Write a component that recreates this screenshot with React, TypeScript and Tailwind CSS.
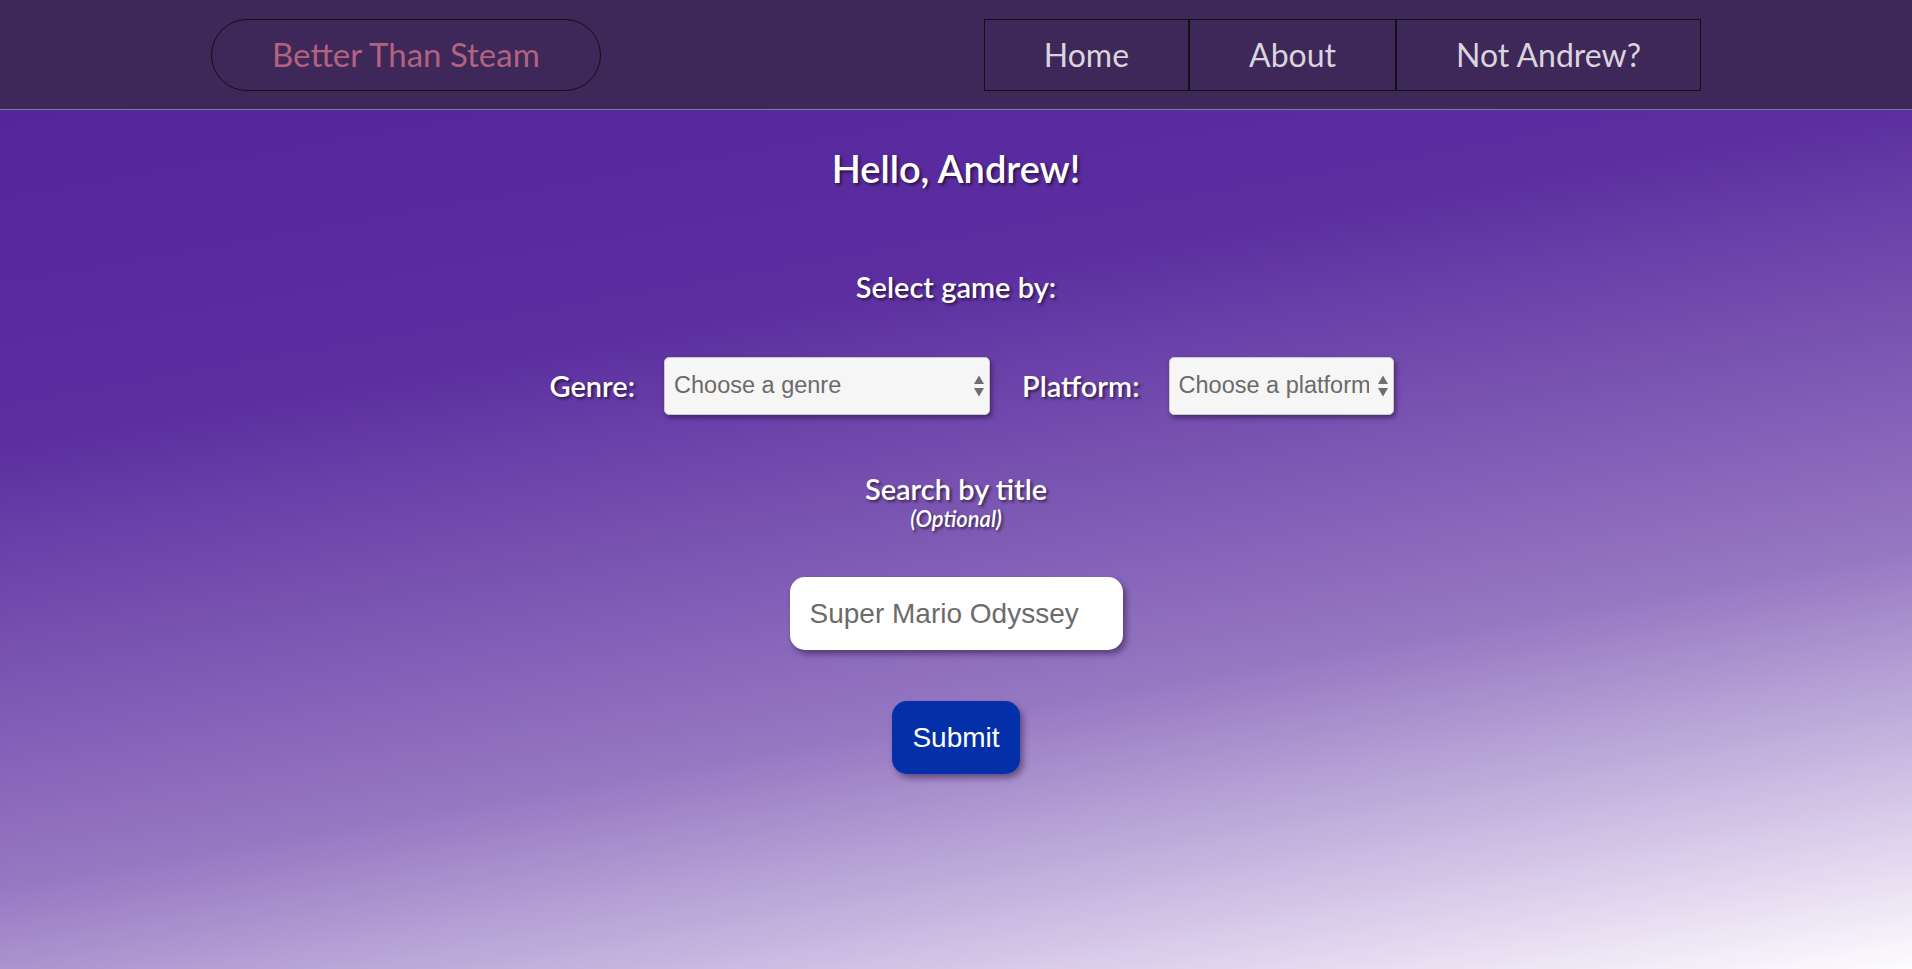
import React from "react";

const heading = "font-['Lato',sans-serif] text-white [text-shadow:2px_2px_3px_rgba(0,0,0,0.55)]";

function SelectBox({ label, width }: { label: string; width: string }) {
  return (
    <div className={`relative ${width} h-[58px]`}>
      <select
        defaultValue=""
        className="h-full w-full appearance-none rounded-[5px] border border-[#c9c9c9] bg-[#f6f6f6] pl-[9px] pr-6 font-['Liberation_Sans',Arial,sans-serif] text-[23.5px] text-[#6b6b6b] shadow-[2px_3px_5px_rgba(20,0,40,0.45)] outline-none"
      >
        <option value="">{label}</option>
      </select>
      <svg
        className="pointer-events-none absolute right-[5px] top-1/2 -translate-y-1/2"
        width="12"
        height="24"
        viewBox="0 0 12 24"
      >
        <path d="M6 1.5 L11 10 L1 10 Z" fill="#6e6e6e" />
        <path d="M6 22.5 L11 14 L1 14 Z" fill="#6e6e6e" />
      </svg>
    </div>
  );
}

function App() {
  return (
    <div className="flex min-h-screen flex-col">
      <header className="flex h-[110px] items-center justify-between border-b border-[#857b8f] bg-[#3e2759] px-[211px] font-['Lato',sans-serif]">
        <div className="flex h-[72px] items-center rounded-full border border-[#111] px-[60px] text-[33px] text-[#b3627f]">
          Better Than Steam
        </div>
        <nav className="flex h-[72px] text-[32px] text-[#d9d5dd]">
          <a className="flex items-center border border-[#111] px-[59px]">Home</a>
          <a className="flex items-center border border-[#111] px-[59px]">About</a>
          <a className="flex items-center border border-[#111] px-[59px]">Not Andrew?</a>
        </nav>
      </header>

      <main className="flex flex-1 flex-col items-center bg-[linear-gradient(170deg,#55259c_0%,#5c2ea0_28%,#6b41a9_37%,#9678c2_65%,#af98d1_73%,#d9cbea_87%,#fdfcfe_100%)] pb-10">
        <h1 className={`${heading} mt-[35px] text-[38px] font-semibold leading-[46px]`}>
          Hello, Andrew!
        </h1>

        <h2 className={`${heading} mt-[78px] text-[29px] font-semibold leading-[35px]`}>
          Select game by:
        </h2>

        <div className="mt-[53px] flex items-center pl-[31px]">
          <span className={`${heading} text-[29px] font-semibold`}>Genre:</span>
          <div className="ml-[29px]">
            <SelectBox label="Choose a genre" width="w-[326px]" />
          </div>
          <span className={`${heading} ml-[32px] text-[29px] font-semibold`}>Platform:</span>
          <div className="ml-[29px]">
            <SelectBox label="Choose a platform" width="w-[225px]" />
          </div>
        </div>

        <h2 className={`${heading} mt-[56px] text-[29px] font-semibold leading-[35px]`}>
          Search by title
        </h2>
        <p className={`${heading} text-[22px] font-semibold italic leading-[26px]`}>(Optional)</p>

        <input
          type="text"
          placeholder="Super Mario Odyssey"
          className="mt-[45px] h-[73px] w-[333px] rounded-[15px] bg-white pl-[20px] font-['Liberation_Sans',Arial,sans-serif] text-[28px] text-[#6b6b6b] shadow-[3px_4px_6px_rgba(20,0,40,0.45)] outline-none placeholder:text-[#6b6b6b]"
        />

        <button className="mt-[51px] h-[73px] rounded-[15px] bg-[#0330a9] px-[20px] font-['Liberation_Sans',Arial,sans-serif] text-[28px] text-white shadow-[3px_4px_6px_rgba(20,0,40,0.45)]">
          Submit
        </button>
      </main>
    </div>
  );
}

export default App;
